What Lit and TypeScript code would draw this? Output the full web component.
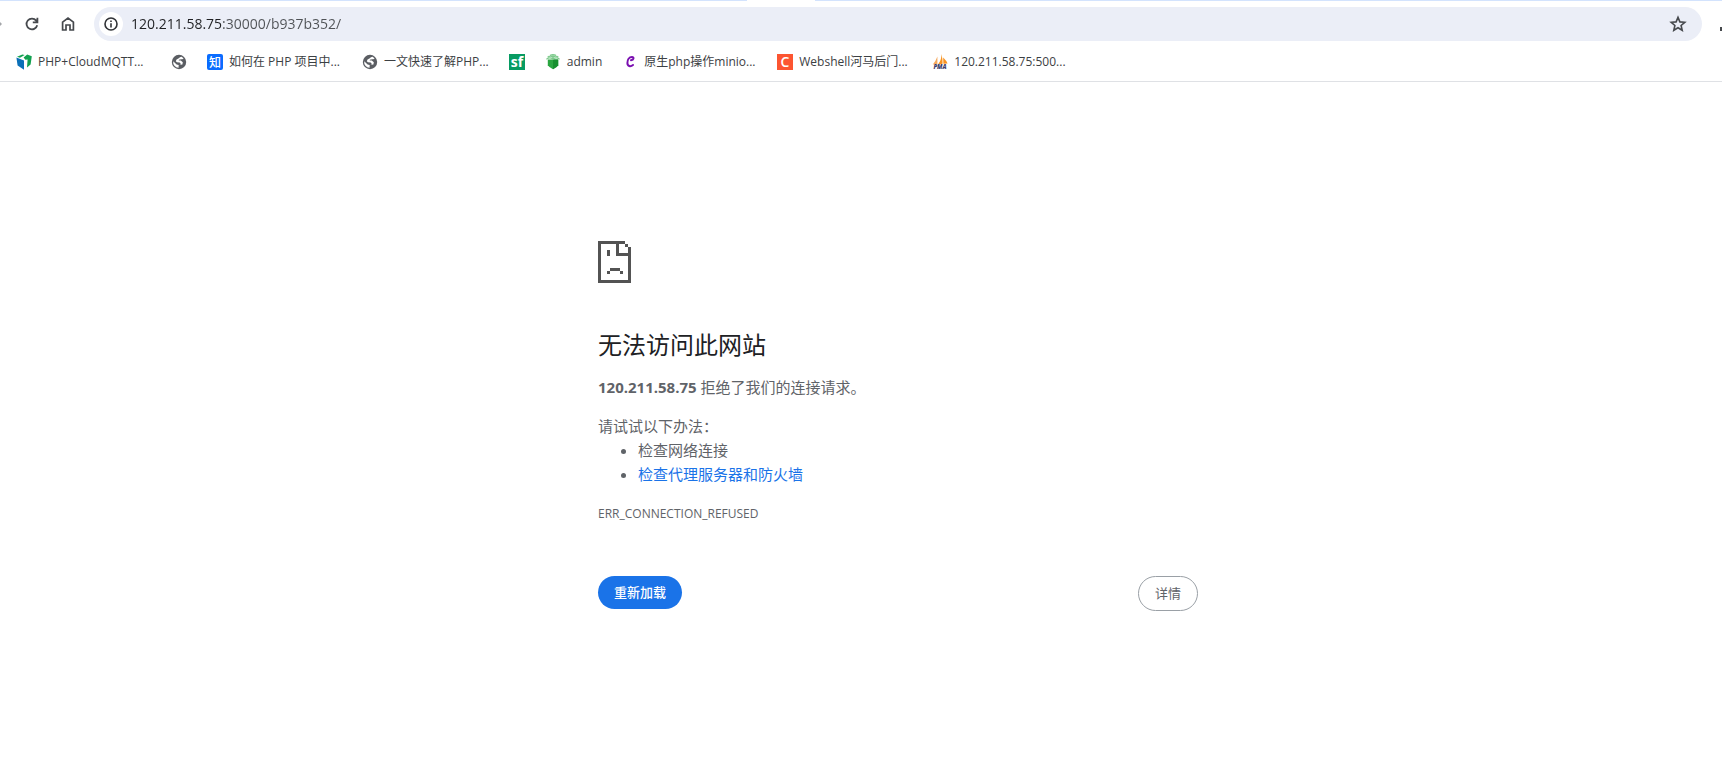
import { LitElement, html, css, svg, TemplateResult } from "lit";
import { customElement } from "lit/decorators.js";
import { classMap } from "lit/directives/class-map.js";

const globe = html`<svg class="icon" viewBox="0 0 16 16" aria-hidden="true">
  <circle cx="8" cy="8" r="7.2" fill="#5b5e63" />
  <path d="M9.4 2.3V3.8Q9.4 5 8.2 5H6.8V6.2Q6.8 7 6 7H4.8V8.4H9.4Q10.2 8.4 10.2 9.2V11.2H11.2Q12 11.2 12.4 11.8A5.8 5.8 0 0 0 9.4 2.3Z" fill="#5b5e63" />
  <path d="M10.6 2.8Q9 3.2 7.4 4.4 5 4.8 4.8 7.2 5.2 8.4 8.6 8.4 9.8 8.8 9.6 10.6L7.6 11.2V13.8A5.8 5.8 0 0 1 2.2 7.2L5.6 10.4 7.6 11 11.4 10.4 11.8 8.2 9.8 6.6 7.6 6.4 8.4 5.4 12.6 5Q12 3.6 10.6 2.8Z" fill="#fff" />
</svg>`;

const tile = (bg: string, glyph: string, cls: string, radius = 0) => html`<svg class="icon" viewBox="0 0 16 16" aria-hidden="true">
  ${svg`<rect width="16" height="16" rx=${radius} fill=${bg} />`}
  <text class=${cls} x="8" y="13" text-anchor="middle" fill="#fff">${glyph}</text>
</svg>`;

const cube = html`<svg class="icon" viewBox="0 0 16 16" aria-hidden="true">
  <path d="M.4 3.4 8 6.4V15.8L1.6 11.6Z" fill="#0b70b8" />
  <path d="M1 2.8 6.4.4 8.6.9 4 3.8Z" fill="#12a150" />
  <path d="M7.6 3.6 11.2.6 15.8 2.2 14.6 10.6 11 13.4 11.6 5.4 9.4 5.8Z" fill="#12a150" />
</svg>`;

const pot = html`<svg class="icon" viewBox="0 0 16 16" aria-hidden="true">
  <path d="M2.8 5.6H13.2V11.2Q11.8 13.4 8 15.2 4.2 13.4 2.8 11.2Z" fill="#2aa540" />
  <path d="M8 5.6H13.2V11.2Q11.8 13.4 8 15.2Z" fill="#178f2f" />
  <path d="M1.4 5.2Q4.6 2.6 8 5 11.4 2.6 14.6 5.2M2.6 3.2Q5.6 1 8 3.4 10.4 1 13.4 3.2M5 1.2Q8 .2 11 1.2M8 1V6" fill="none" stroke="#7cc98b" stroke-width="1.2" />
</svg>`;

const curl = html`<svg class="icon" viewBox="0 0 16 16" aria-hidden="true">
  <path d="M9 6.2C12 5.8 12.2 3 10 3 7 3 5.4 6 5.4 9 5.4 12.4 8.6 13 11 11" fill="none" stroke="#7a0fb0" stroke-width="2" stroke-linecap="round" />
</svg>`;

const sails = html`<svg class="icon" viewBox="0 0 16 16" aria-hidden="true">
  <path d="M5.4 2.4V10L.8 10.4Q3.8 7 5.4 2.4Z" fill="#f5a95c" />
  <path d="M9.4 0Q9.6 6 6 10.4L10.6 9.8Q10.8 5 9.4 0Z" fill="#f79321" />
  <path d="M11.2 3.4Q14.4 6.4 15.6 9.6L11.4 9.8Z" fill="#f79321" />
  <text class="pma" x="8" y="15" text-anchor="middle" fill="#3f3f6e">PMA</text>
</svg>`;

const bookmarks: { icon: TemplateResult; text: string; name?: string; long?: boolean }[] = [
  { icon: cube, text: "PHP+CloudMQTT...", long: true },
  { icon: globe, text: "", name: "网站" },
  { icon: tile("#0a6cff", "知", "zhi", 2), text: "如何在 PHP 项目中...", long: true },
  { icon: globe, text: "一文快速了解PHP..." },
  { icon: tile("#079b62", "sf", "sf"), text: "", name: "sf" },
  { icon: pot, text: "admin" },
  { icon: curl, text: "原生php操作minio...", long: true },
  { icon: tile("#fc5531", "C", "cee"), text: "Webshell河马后门...", long: true },
  { icon: sails, text: "120.211.58.75:500...", long: true },
];

@customElement("browser-toolbar")
class BrowserToolbar extends LitElement {
  static styles = css`
    :host { display: block; border-bottom: 1px solid #dfe1e5; color: #3c4043; }
    .strip { display: grid; grid-template-columns: 747fr 68px 907fr; height: 1px; }
    .tabs { background: #d3e3fd; }
    .row { display: flex; align-items: center; height: 34px; padding: 6px 0 0; }
    button { appearance: none; border: 0; background: none; padding: 0; margin: 0; display: grid; place-items: center; }
    .edge { width: 14px; height: 34px; flex: none; justify-items: start; }
    .nav { width: 36px; height: 34px; flex: none; }
    .omni { flex: 1; min-width: 0; display: flex; align-items: center; height: 34px; margin-left: 8px; border-radius: 17px; background: #ebeef7; padding: 0 14px 0 5px; }
    .info { width: 24px; height: 24px; border-radius: 12px; background: #fff; flex: none; }
    .url { flex: 1; min-width: 0; margin-left: 8px; border: 0; padding: 0; outline: 0; font: 14px/20px "Open Sans", "Noto Sans CJK SC", sans-serif; color: transparent; background: linear-gradient(to right, #1f2023 90px, #4f5256 90px); background-clip: text; -webkit-background-clip: text; }
    .star { width: 20px; height: 20px; flex: none; }
    .menu { width: 20px; height: 34px; flex: none; justify-items: end; }
    .marks { display: flex; align-items: center; height: 38px; gap: 20px; padding: 2px 16px 0; white-space: nowrap; overflow: hidden; }
    .mark { display: flex; align-items: center; gap: 6px; font: 12px/16px "Open Sans", "Noto Sans CJK SC", sans-serif; color: #3c4043; text-decoration: none; }
    .long { min-width: 113px; }
    .icon { width: 16px; height: 16px; flex: none; display: block; overflow: visible; }
    .zhi { font: 500 12px "Noto Sans CJK SC", sans-serif; }
    .sf { font: 700 14px "Open Sans", sans-serif; }
    .cee { font: 600 14px "Open Sans", sans-serif; }
    .pma { font: italic 800 6px "Open Sans", sans-serif; }
  `;

  render() {
    return html`
      <div class="strip"><span class="tabs"></span><span></span><span class="tabs"></span></div>
      <div class="row">
        <button class="edge" aria-label="前进"><svg width="3" height="6" viewBox="0 0 3 6"><path d="M0 1 2 3 0 5Z" fill="#a4a6a9" /></svg></button>
        <button class="nav" aria-label="重新加载此页"><svg width="16" height="16" viewBox="0 0 16 16" fill="none" stroke="#46494d" stroke-width="1.8"><path d="M13.2 9.2A5.4 5.4 0 1 1 12.2 4.6L13.4 6M13.4 1.8V6.4H8.8" /></svg></button>
        <button class="nav" aria-label="主页"><svg width="16" height="16" viewBox="0 0 16 16" fill="none" stroke="#46494d" stroke-width="1.7"><path d="M2.6 6.2 8 2 13.4 6.2V14H10V9H6V14H2.6Z" /></svg></button>
        <div class="omni">
          <button class="info" aria-label="查看网站信息"><svg width="14" height="14" viewBox="0 0 14 14"><circle cx="7" cy="7" r="6" fill="none" stroke="#303236" stroke-width="1.6" /><path d="M6.2 3.4H7.8V5H6.2ZM6.2 6.2H7.8V10.6H6.2Z" fill="#303236" /></svg></button>
          <input class="url" aria-label="地址栏" value="120.211.58.75:30000/b937b352/" />
          <button class="star" aria-label="收藏"><svg width="18" height="18" viewBox="0 0 18 18"><path d="M9 2.4 10.9 6.9 15.8 7.3 12.1 10.5 13.2 15.3 9 12.8 4.8 15.3 5.9 10.5 2.2 7.3 7.1 6.9Z" fill="none" stroke="#46494d" stroke-width="1.6" /></svg></button>
        </div>
        <button class="menu" aria-label="扩展程序"><svg width="2" height="14" viewBox="0 0 2 14"><path d="M0 10H2V14H0Z" fill="#46494d" /></svg></button>
      </div>
      <nav class="marks" aria-label="书签">
        ${bookmarks.map(
          (b) => html`<a class="mark" href="#" aria-label=${b.name ?? b.text}>${b.icon}${b.text ? html`<span class=${classMap({ long: !!b.long })}>${b.text}</span>` : ""}</a>`
        )}
      </nav>
    `;
  }
}

@customElement("error-page")
class ErrorPage extends LitElement {
  static styles = css`
    :host { display: grid; grid-template-columns: minmax(0, 598fr) minmax(0, 600px) minmax(0, 524fr); padding-top: 159px; color: #5f6368; font: 15px/24px "Open Sans", "Noto Sans CJK SC", sans-serif; }
    .content { grid-column: 2; }
    .sad { display: block; width: 33px; height: 42px; }
    h1 { margin: 44px 0 12px; font-size: 24px; line-height: 36px; font-weight: 400; color: #202124; }
    p { margin: 0; }
    .tips { margin-top: 15px; }
    ul { margin: 0; padding: 0 0 0 40px; }
    a { color: #1a73e8; text-decoration: none; }
    .code { margin-top: 16px; font-size: 12px; }
    .buttons { display: flex; justify-content: space-between; align-items: flex-start; margin-top: 50px; }
    button { appearance: none; margin: 0; font: 13px/17px "Open Sans", "Noto Sans CJK SC", sans-serif; padding: 8px 16px; border-radius: 20px; }
    .reload { border: 0; background: #1a73e8; color: #fff; font-weight: 500; }
    .details { border: 1px solid #9aa0a6; background: #fff; color: #5f6368; }
  `;

  render() {
    return html`
      <main class="content">
        <svg class="sad" viewBox="0 0 33 42" shape-rendering="crispEdges" aria-hidden="true">
          <path fill="#535353" d="M0 0H27V3H21V12H33V15H18V3H3V39H30V15H33V42H0ZM27 3H30V6H27ZM30 6H33V15H30ZM9 9H12V15H9ZM12 27H22V30H12ZM9 30H12V33H9ZM22 30H25V33H22Z" />
        </svg>
        <h1>无法访问此网站</h1>
        <p><strong>120.211.58.75</strong> 拒绝了我们的连接请求。</p>
        <p class="tips">请试试以下办法：</p>
        <ul>
          <li>检查网络连接</li>
          <li><a href="#">检查代理服务器和防火墙</a></li>
        </ul>
        <p class="code">ERR_CONNECTION_REFUSED</p>
        <div class="buttons">
          <button class="reload">重新加载</button>
          <button class="details">详情</button>
        </div>
      </main>
    `;
  }
}

@customElement("app-root")
class AppRoot extends LitElement {
  static styles = css`
    :host { display: block; min-height: 100vh; background: #fff; overflow: hidden; }
  `;

  render() {
    return html`<browser-toolbar></browser-toolbar><error-page lang="zh-CN"></error-page>`;
  }
}
